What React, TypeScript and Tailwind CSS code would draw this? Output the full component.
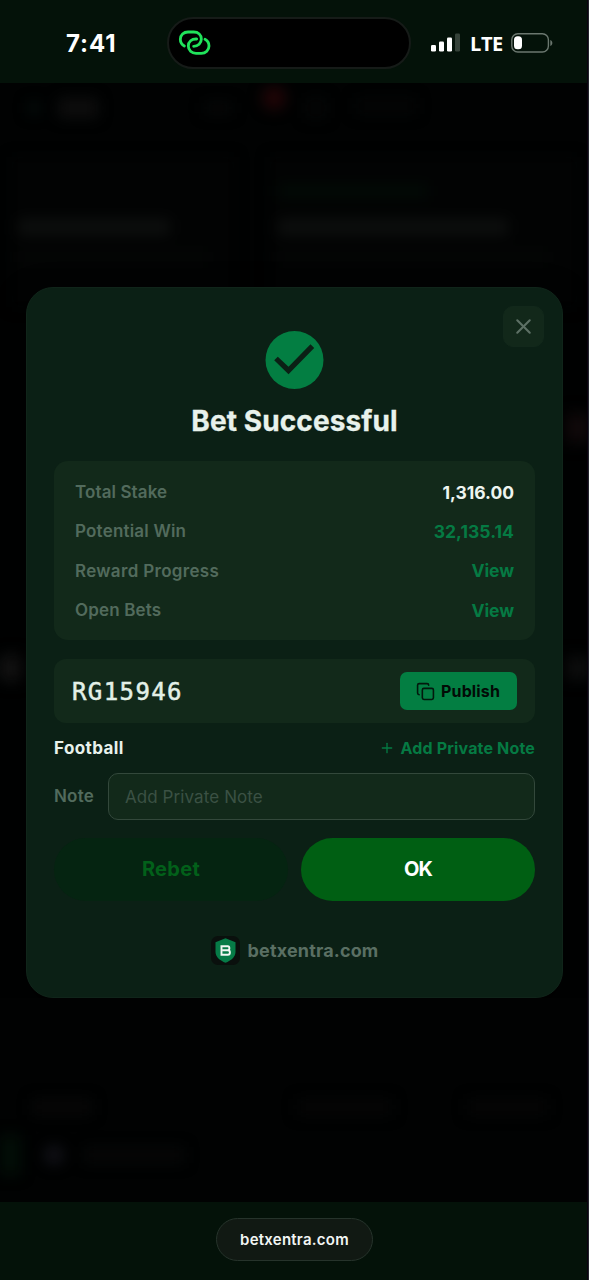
import React from "react";

import clsx from "clsx";
import { Copy, Plus, X } from "lucide-react";

interface IBetRow {
  label: string;
  value: string;
  labelClassName: string;
  valueClassName: string;
}

const betRows: IBetRow[] = [
  {
    label: "Total Stake",
    value: "1,316.00",
    labelClassName: "tracking-[0.1px]",
    valueClassName: "text-[#eef5f0] tracking-[0px]",
  },
  {
    label: "Potential Win",
    value: "32,135.14",
    labelClassName: "tracking-[0.2px]",
    valueClassName: "text-[#057a43] tracking-[0.05px]",
  },
  {
    label: "Reward Progress",
    value: "View",
    labelClassName: "tracking-[0.32px]",
    valueClassName: "text-[#057a43] tracking-[-0.1px]",
  },
  {
    label: "Open Bets",
    value: "View",
    labelClassName: "tracking-[0.15px]",
    valueClassName: "text-[#057a43] tracking-[-0.1px]",
  },
];

const LinkIcon = () => (
  <svg
    width="33"
    height="28"
    viewBox="536 88 99 84"
    fill="none"
    stroke="#20e35b"
    strokeWidth="8.5"
    strokeLinecap="round"
  >
    <path d="M555 139C548 135 543 128 543 119C543 106 553 97 566 97H583C597 97 606 106 606 118C606 131 596 140 583 140" />
    <path d="M592 118C577 117 567 126 567 139C567 152 577 161 590 161H606C619 161 629 151 629 139C629 130 625 123 617 119" />
  </svg>
);

const StatusBar = () => (
  <div className="flex h-[83px] shrink-0 items-start bg-[#041209] pl-[66px] pt-[17px] text-white">
    <span className="w-[101px] pt-[9px] text-[24px] font-bold leading-[36px] tracking-[0.9px]">
      7:41
    </span>
    <div className="flex h-[52px] w-[244px] items-center rounded-full border-2 border-[#161b18] bg-black pl-[9px]">
      <LinkIcon />
    </div>
    <div className="ml-5 flex h-[52px] items-center">
      <svg width="30" height="20" viewBox="0 0 30 20" fill="#fff">
        <rect x="0" y="12" width="5" height="6.5" rx="1.3" />
        <rect x="8" y="8.5" width="5" height="10" rx="1.3" />
        <rect x="16" y="4.5" width="5" height="14" rx="1.3" />
        <rect x="24" y="0.5" width="5" height="18" rx="1.3" fill="#354239" />
      </svg>
      <span className="ml-[9px] w-[41px] pt-[2px] font-['Open_Sans',sans-serif] text-[20px] font-bold leading-6 tracking-[-0.4px]">
        LTE
      </span>
      <svg width="43" height="20" viewBox="0 0 43 20" fill="none">
        <rect
          x="0.8"
          y="0.8"
          width="36.6"
          height="18.2"
          rx="6"
          stroke="#6b776f"
          strokeWidth="1.4"
        />
        <path d="M39.3 7v6c1.4-.6 2-1.700 2-3s-.6-2.400-2-3z" fill="#6b776f" />
        <rect x="3" y="3.300" width="8" height="13" rx="3.500" fill="#fff" />
      </svg>
    </div>
  </div>
);

// Dimmed page that shows faintly behind the dialog
const Backdrop = () => (
  <div className="absolute inset-0 flex flex-col overflow-hidden bg-[#010202]">
    <div className="flex h-[50px] items-start pl-7 pt-[15px] blur-[7px]">
      <div className="mt-1 h-3 w-3 bg-[#050d0b]" />
      <div className="ml-[18px] h-5 w-[40px] rounded bg-[#0d0d0d]" />
      <div className="ml-[106px] mt-1 h-3 w-7 bg-[#060707]" />
      <div className="-mt-3 ml-[30px] h-6 w-6 rounded-full bg-[#200507]" />
      <div className="ml-[20px] h-5 w-5 bg-[#050606]" />
      <div className="ml-[30px] h-4 w-[60px] bg-[#040505]" />
    </div>
    <div className="mt-6 flex h-[150px] gap-9 px-3 blur-[7px]">
      <div className="w-[222px] bg-[#020303] pl-[6px] pt-[62px]">
        <div className="h-4 w-[152px] rounded bg-[#0d0f0e]" />
        <div className="mt-4 h-3 w-[190px] bg-[#040605]" />
      </div>
      <div className="grow bg-[#020303] pl-2 pt-[28px]">
        <div className="h-3 w-[150px] bg-[#020b06]" />
        <div className="mt-[22px] h-4 w-[230px] rounded bg-[#0d0f0e]" />
        <div className="mt-4 h-3 w-[270px] bg-[#040605]" />
      </div>
    </div>
    <div className="flex h-[225px] items-end justify-end blur-[8px]">
      <div className="mb-[90px] h-7 w-7 rounded bg-[#140c0d]" />
    </div>
    <div className="mt-[26px] flex h-[80px] items-center justify-between pt-[28px] blur-[8px]">
      <div className="mt-28 h-6 w-6 bg-[#171717]" />
      <div className="mt-28 h-5 w-7 bg-[#111212]" />
    </div>
    <div className="mt-auto flex h-[103px] flex-col blur-[7px]">
      <div className="flex pl-8">
        <div className="h-4 w-[60px] bg-[#070707]" />
        <div className="ml-[205px] h-4 w-[95px] bg-[#050505]" />
        <div className="ml-[75px] h-4 w-[80px] bg-[#050505]" />
      </div>
      <div className="mt-5 flex items-center">
        <div className="h-10 w-5 bg-[#020e07]" />
        <div className="ml-6 h-5 w-5 rounded-full bg-[#111117]" />
        <div className="ml-5 h-4 w-[100px] bg-[#060707]" />
      </div>
    </div>
  </div>
);

const SuccessIcon = () => (
  <svg className="mx-auto" width="59" height="59" viewBox="0 0 59 59">
    <circle cx="29.500" cy="29" r="29" fill="#037e42" />
    <path
      d="M9.200 29.300L12.800 25.700L23.500 35.700L45.500 13.300L49.200 17L23.500 43.300Z"
      fill="#0b2015"
    />
  </svg>
);

const BrandLogo = () => (
  <div className="flex h-[29px] w-[29px] items-center justify-center rounded-[7px] bg-[#0a100d]">
    <svg width="21" height="25" viewBox="0 0 21 25" fill="none">
      <path
        d="M10.500 0.300L20.500 4.200V14C20.500 19 16 22.500 10.500 24.800C5 22.500 0.500 19 0.500 14V4.200Z"
        fill="#067b47"
      />
      <path
        d="M5.500 8.200H12.800C14.900 8.200 14.900 12.300 12.800 12.300H7.500M12.800 12.300C15.600 12.300 15.600 16.800 12.800 16.800H6.500V8.200"
        stroke="#f1f7f3"
        strokeWidth="1.900"
      />
    </svg>
  </div>
);

const BetSuccessDialog = () => (
  <div className="relative mx-auto mt-[204px] flex h-[711px] w-[537px] flex-col rounded-[27px] border border-[#10251a] bg-[#0b2015] px-[27px] pt-[43px] shadow-[0_10px_30px_#000]">
    <button className="absolute right-[18px] top-[18px] flex h-[41px] w-[41px] items-center justify-center rounded-[10px] border border-[#12281b] bg-[#12281a]">
      <X size={25} strokeWidth={2} className="text-[#5d7065]" />
    </button>

    <SuccessIcon />
    <h1 className="mt-[11px] text-center text-[28px] font-bold leading-[40px] tracking-[0.1px] text-[#e8f2ec] [-webkit-text-stroke:0.3px_#e8f2ec]">
      Bet Successful
    </h1>

    <div className="mt-[20px] flex h-[179px] shrink-0 flex-col rounded-[14px] bg-[#12291a] px-[21px] pt-[12px]">
      {betRows.map((row) => (
        <div
          key={row.label}
          className="flex h-[39.400px] items-center justify-between text-[17px]"
        >
          <span
            className={clsx("font-semibold text-[#526b5d]", row.labelClassName)}
          >
            {row.label}
          </span>
          <span className={clsx("text-[17.500px] font-bold", row.valueClassName)}>
            {row.value}
          </span>
        </div>
      ))}
    </div>

    <div className="mt-[19px] flex h-16 shrink-0 items-center justify-between rounded-[12px] bg-[#12291a] pl-[18px] pr-[18px]">
      <span className="pt-[2px] font-['DejaVu_Sans_Mono',monospace] text-[24px] tracking-[1.400px] text-[#e3f0e7] [-webkit-text-stroke:0.500px_#e3f0e7]">
        RG15946
      </span>
      <button className="flex h-[38px] w-[117px] items-center rounded-[7px] bg-[#037e42] pl-4 text-[16px] font-bold text-[#020b06]">
        <Copy size={19} strokeWidth={2} className="shrink-0 text-[#03180d]" />
        <span className="ml-[6px] tracking-[0.150px]">Publish</span>
      </button>
    </div>

    <div className="mt-[13px] flex h-6 shrink-0 items-center justify-between">
      <span className="pt-[2px] text-[17px] font-bold tracking-[0.4px] text-[#e8f2ec]">
        Football
      </span>
      <button className="flex items-center text-[16px] font-bold tracking-[0.16px] text-[#057a43]">
        <Plus size={16} strokeWidth={2} className="mr-[6px]" />
        <span>Add Private Note</span>
      </button>
    </div>

    <div className="mt-[13px] flex h-[47px] shrink-0 items-center">
      <span className="w-[54px] text-[17px] font-semibold tracking-[0.2px] text-[#526b5d]">
        Note
      </span>
      <input
        placeholder="Add Private Note"
        className="h-full w-[428px] rounded-[10px] border border-[#33483b] bg-[#12291a] px-4 text-[17px] tracking-[0.1px] placeholder:text-[#3b5144]"
      />
    </div>

    <div className="mt-[18px] grid h-[63px] shrink-0 grid-cols-2 gap-[13px] text-[20px] font-bold">
      <button className="rounded-full bg-[#052411] pb-[2px] tracking-[0.3px] text-[#02601a]">
        Rebet
      </button>
      <button className="rounded-full bg-[#005f13] pb-[2px] tracking-[-0.8px] text-white">
        OK
      </button>
    </div>

    <div className="mt-[35px] flex items-center justify-center gap-2">
      <BrandLogo />
      <span className="text-[18px] font-bold tracking-[0.160px] text-[#5a6f63]">
        betxentra.com
      </span>
    </div>
  </div>
);

const App = () => (
  <div className="relative flex h-[1280px] w-[589px] flex-col overflow-hidden bg-black font-['Inter',sans-serif]">
    <StatusBar />
    <div className="relative h-[1119px] shrink-0">
      <Backdrop />
      <div className="overflow-hidden">
        <BetSuccessDialog />
      </div>
    </div>
    <div className="flex grow items-start justify-center bg-[#041209] pt-4">
      <div className="flex h-[43px] w-[157px] items-center justify-center rounded-full border border-[#26332b] bg-[#111913] pt-px text-[15px] font-semibold tracking-[0.250px] text-[#f2f6f3]">
        betxentra.com
      </div>
    </div>
    <div className="absolute inset-y-0 right-0 w-[2px] border-r border-[#20262a] bg-[#0c0210]" />
  </div>
);

export default App;
